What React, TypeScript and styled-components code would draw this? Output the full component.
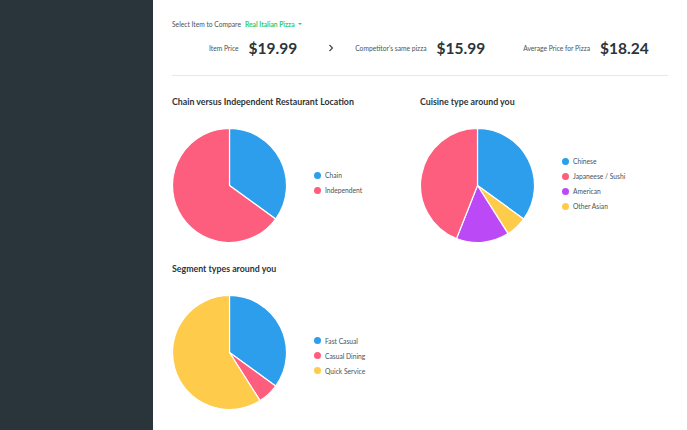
import React from "react";
import styled, { createGlobalStyle } from "styled-components";

const Global = createGlobalStyle`
  html, body { margin: 0; padding: 0; background: #fff; }
  body { font-family: Lato, "Open Sans", sans-serif; -webkit-font-smoothing: antialiased; }
  * { box-sizing: border-box; }
`;

const Layout = styled.div`
  display: flex;
  min-height: 430px;
`;

const Sidebar = styled.aside`
  width: 153px;
  flex-shrink: 0;
  background: #2a353b;
`;

const Main = styled.main`
  flex: 1;
  padding: 18px 20px 0 19px;
`;

const Header = styled.header`
  border-bottom: 1px solid #e6e8ea;
  padding-bottom: 16px;
`;

const SelectRow = styled.div`
  display: flex;
  align-items: center;
  gap: 4px;
  height: 12px;
  font-size: 6.7px;
  color: #4a5257;
  white-space: nowrap;
`;

const Picker = styled.span`
  color: #2ecc6e;
  font-weight: 700;
  display: inline-flex;
  align-items: center;
  gap: 3px;
`;

const Caret = styled.span`
  width: 0;
  height: 0;
  border-left: 2.5px solid transparent;
  border-right: 2.5px solid transparent;
  border-top: 2.5px solid #2ecc6e;
`;

const PriceRow = styled.div`
  display: flex;
  align-items: center;
  height: 22px;
  margin-top: 7px;
  padding-left: 37px;
  white-space: nowrap;
`;

const PriceGroup = styled.div<{ $after: number }>`
  display: flex;
  align-items: center;
  gap: 10px;
  margin-right: ${(p) => p.$after}px;
`;

const PriceLabel = styled.span`
  font-size: 6.7px;
  color: #4a5257;
`;

const PriceValue = styled.span`
  font-size: 15.5px;
  font-weight: 700;
  color: #2c3439;
`;

const Chevron = styled.svg`
  width: 6px;
  height: 8px;
  margin-right: 21px;
`;

const ChartsGrid = styled.section`
  display: grid;
  grid-template-columns: 248px 248px;
  padding-top: 19px;
`;

const ChartBlock = styled.div`
  display: flex;
  flex-direction: column;
  gap: 19px;
  padding-bottom: 19px;
`;

const ChartTitle = styled.h3`
  margin: 0;
  font-size: 8.8px;
  line-height: 14px;
  font-weight: 700;
  color: #2c3439;
  white-space: nowrap;
`;

const ChartBody = styled.div`
  display: flex;
  align-items: center;
  gap: 27px;
`;

const PieSvg = styled.svg`
  width: 115px;
  height: 115px;
  flex-shrink: 0;
  display: block;
`;

const Legend = styled.ul<{ $shift: number }>`
  list-style: none;
  margin: 0;
  padding: 0;
  display: flex;
  flex-direction: column;
  gap: 4px;
  transform: translateY(${(p) => p.$shift}px);
`;

const LegendItem = styled.li`
  display: flex;
  align-items: center;
  gap: 4px;
  height: 11px;
  font-size: 6.7px;
  color: #4a5257;
  white-space: nowrap;
`;

const Dot = styled.span<{ $color: string }>`
  width: 7px;
  height: 7px;
  border-radius: 50%;
  background: ${(p) => p.$color};
`;

const BLUE = "#2d9eec";
const PINK = "#fe5e7d";
const PURPLE = "#bb4af6";
const YELLOW = "#fecb4a";

type Slice = { label: string; value: number; color: string };

function Pie({ data }: { data: Slice[] }) {
  const total = data.reduce((s, d) => s + d.value, 0);
  const cx = 57.5;
  const cy = 57.5;
  const r = 57;
  let acc = 0;
  const paths = data.map((d) => {
    const a0 = (acc / total) * Math.PI * 2;
    acc += d.value;
    const a1 = (acc / total) * Math.PI * 2;
    const x0 = cx + r * Math.sin(a0);
    const y0 = cy - r * Math.cos(a0);
    const x1 = cx + r * Math.sin(a1);
    const y1 = cy - r * Math.cos(a1);
    const large = a1 - a0 > Math.PI ? 1 : 0;
    const dPath = `M${cx},${cy} L${x0},${y0} A${r},${r} 0 ${large} 1 ${x1},${y1} Z`;
    return <path key={d.label} d={dPath} fill={d.color} stroke="#fff" strokeWidth={1.2} strokeLinejoin="round" />;
  });
  return <PieSvg viewBox="0 0 115 115">{paths}</PieSvg>;
}

function Chart({
  title,
  slices,
  legend,
  shift,
}: {
  title: string;
  slices: Slice[];
  legend: Slice[];
  shift: number;
}) {
  return (
    <ChartBlock>
      <ChartTitle>{title}</ChartTitle>
      <ChartBody>
        <Pie data={slices} />
        <Legend $shift={shift}>
          {legend.map((d) => (
            <LegendItem key={d.label}>
              <Dot $color={d.color} />
              {d.label}
            </LegendItem>
          ))}
        </Legend>
      </ChartBody>
    </ChartBlock>
  );
}

const chain: Slice[] = [
  { label: "Chain", value: 35, color: BLUE },
  { label: "Independent", value: 65, color: PINK },
];

const cuisineSlices: Slice[] = [
  { label: "Chinese", value: 35, color: BLUE },
  { label: "Other Asian", value: 6, color: YELLOW },
  { label: "American", value: 15, color: PURPLE },
  { label: "Japaneese / Sushi", value: 44, color: PINK },
];
const cuisineLegend: Slice[] = [cuisineSlices[0], cuisineSlices[3], cuisineSlices[2], cuisineSlices[1]];

const segment: Slice[] = [
  { label: "Fast Casual", value: 35, color: BLUE },
  { label: "Casual Dining", value: 6, color: PINK },
  { label: "Quick Service", value: 59, color: YELLOW },
];

export default function App() {
  return (
    <Layout>
      <Global />
      <Sidebar />
      <Main>
        <Header>
          <SelectRow>
            Select Item to Compare
            <Picker>
              Real Italian Pizza
              <Caret />
            </Picker>
          </SelectRow>
          <PriceRow>
            <PriceGroup $after={31}>
              <PriceLabel>Item Price</PriceLabel>
              <PriceValue>$19.99</PriceValue>
            </PriceGroup>
            <Chevron viewBox="0 0 6 8">
              <path d="M1.5 1 L4.5 4 L1.5 7" fill="none" stroke="#3a4247" strokeWidth={1.1} />
            </Chevron>
            <PriceGroup $after={38}>
              <PriceLabel>Competitor's same pizza</PriceLabel>
              <PriceValue>$15.99</PriceValue>
            </PriceGroup>
            <PriceGroup $after={0}>
              <PriceLabel>Average Price for Pizza</PriceLabel>
              <PriceValue>$18.24</PriceValue>
            </PriceGroup>
          </PriceRow>
        </Header>
        <ChartsGrid>
          <Chart title="Chain versus Independent Restaurant Location" shift={-3} slices={chain} legend={chain} />
          <Chart title="Cuisine type around you" shift={-2} slices={cuisineSlices} legend={cuisineLegend} />
          <Chart title="Segment types around you" shift={3} slices={segment} legend={segment} />
        </ChartsGrid>
      </Main>
    </Layout>
  );
}
